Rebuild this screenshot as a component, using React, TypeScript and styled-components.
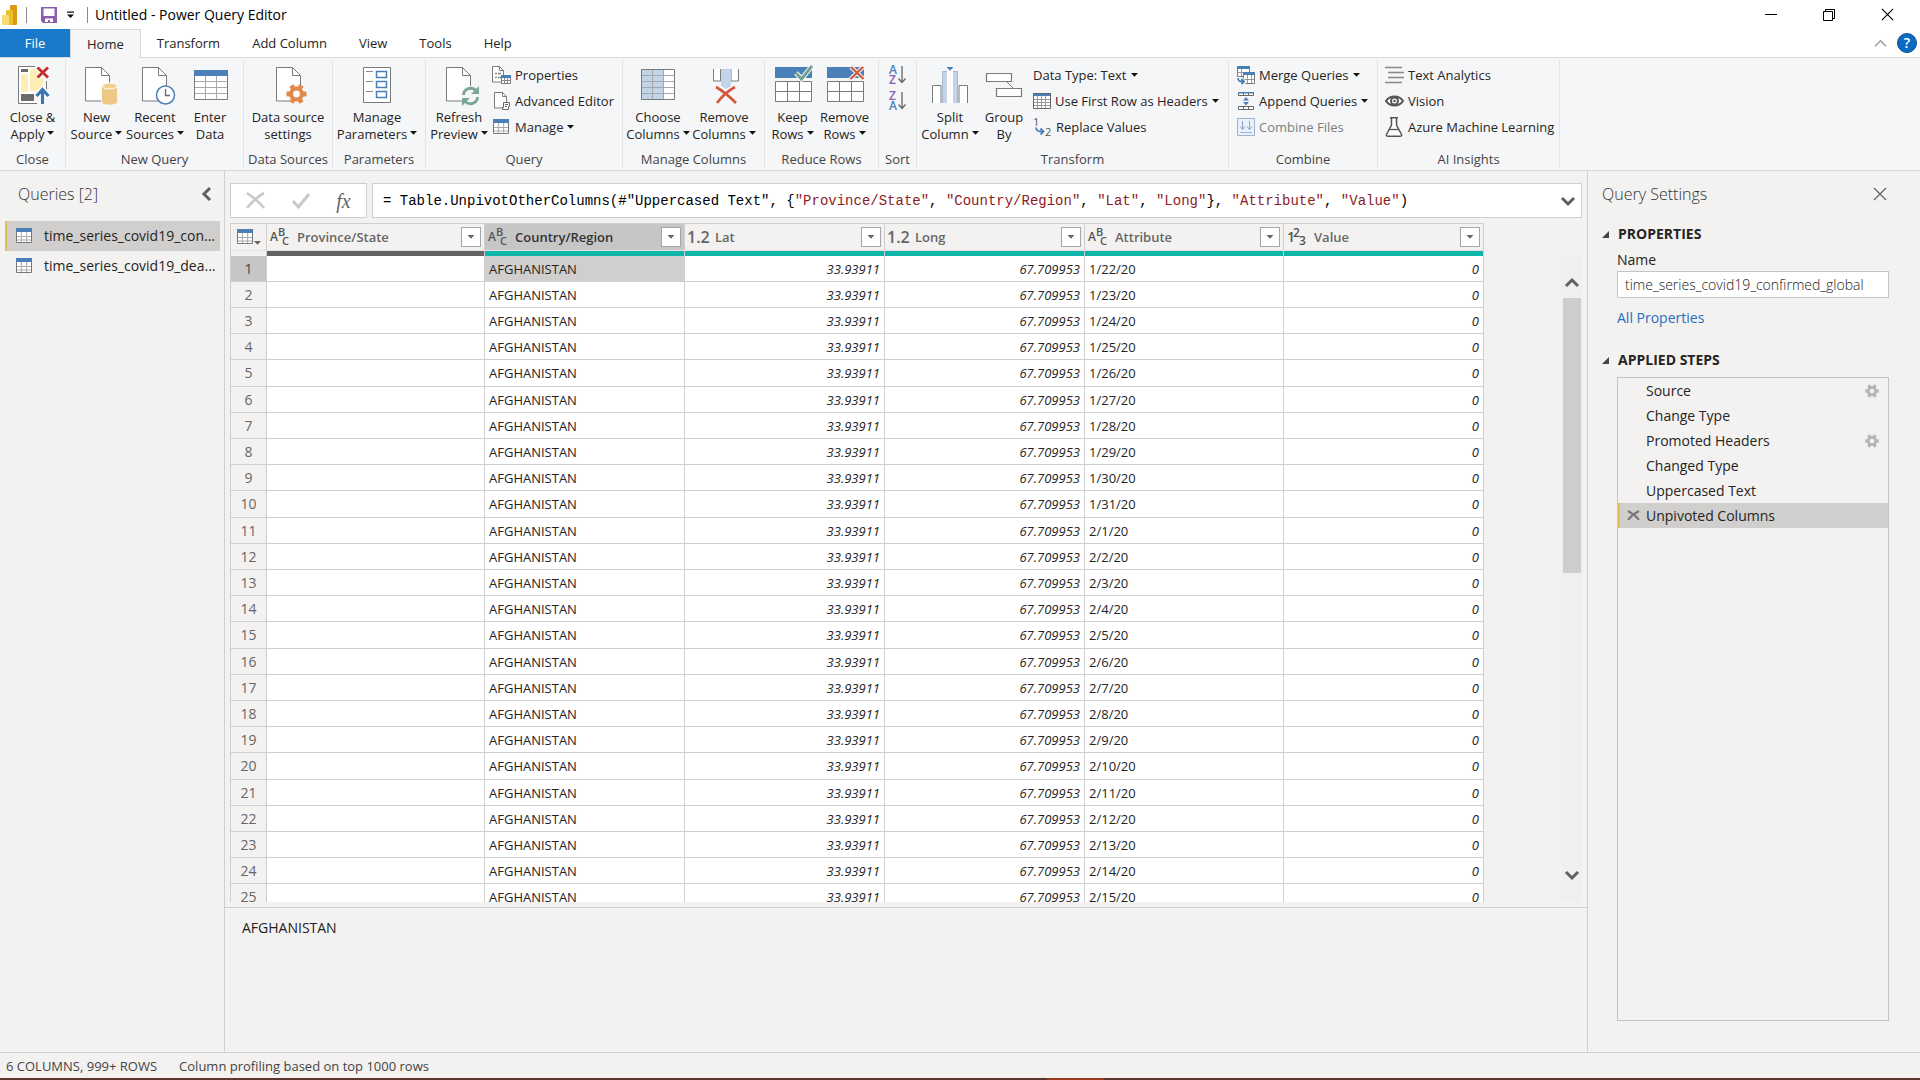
import React from "react";
import styled, { createGlobalStyle, css } from "styled-components";

const ui = `"Open Sans", "Noto Sans", "Liberation Sans", sans-serif`;
const mono = `"Liberation Mono", "DejaVu Sans Mono", monospace`;
const line = "#cfcfcf";
const panel = "#f3f2f1";

const Global = createGlobalStyle`
  * { box-sizing: border-box; }
  body { margin: 0; background: ${panel}; font-family: ${ui}; font-size: 13px; color: #252423; }
  button { font: inherit; color: inherit; background: none; border: 0; padding: 0; margin: 0; cursor: default; }
  svg { display: block; flex: none; overflow: visible; }
`;

/* ---------- shell ---------- */
const Window = styled.div`
  display: flex;
  flex-direction: column;
  height: 100vh;
  overflow: hidden;
`;
const TitleBar = styled.header`
  display: flex;
  align-items: center;
  height: 29px;
  flex: none;
  background: #fff;
  padding: 0 4px 0 2px;
`;
const Divider = styled.span`
  width: 1px;
  height: 16px;
  background: #8a8a8a;
`;
const QuickTools = styled.div`
  display: flex;
  align-items: center;
  gap: 10px;
  padding: 0 13px 0 14px;
`;
const Title = styled.h1`
  margin: 0 auto 0 7px;
  font-size: 14px;
  line-height: 20px;
  font-weight: 400;
  color: #000;
`;
const Brand = styled.span`
  margin-right: 9px;
`;
const WindowButton = styled.button`
  display: flex;
  justify-content: center;
  align-items: center;
  width: 58px;
  height: 28px;
`;

/* ---------- tabs ---------- */
const TabBar = styled.nav`
  display: flex;
  align-items: stretch;
  height: 29px;
  flex: none;
  background: #fff;
  border-bottom: 1px solid #d6d8da;
`;
const Tab = styled.button<{ $kind?: "file" | "active" }>`
  padding: 0 16px;
  line-height: 28px;
  ${(p) =>
    p.$kind === "file" &&
    css`
      width: 70px;
      background: #1979ca;
      color: #fff;
    `}
  ${(p) =>
    p.$kind === "active" &&
    css`
      line-height: 26px;
      height: 29px;
      background: #f5f6f8;
      border: 1px solid #d6d8da;
      border-bottom: 0;
    `}
`;
const TabTools = styled.div`
  display: flex;
  align-items: center;
  gap: 10px;
  margin-left: auto;
  padding-right: 3px;
`;
const HelpButton = styled.button`
  width: 20px;
  height: 20px;
  border-radius: 50%;
  background: #0b6bc4;
  border: 1px solid #0a4f8c;
  color: #fff;
  font-weight: 600;
  font-size: 14px;
  line-height: 18px;
`;

/* ---------- ribbon ---------- */
const Ribbon = styled.div`
  display: flex;
  flex: none;
  height: 113px;
  background: #f5f6f8;
  border-bottom: 1px solid #d6d8da;
`;
const Group = styled.section<{ $w: number }>`
  display: flex;
  flex-direction: column;
  flex: none;
  width: ${(p) => p.$w}px;
  margin: 2px 0;
  border-right: 1px solid #e1e3e5;
`;
const GroupBody = styled.div<{ $center?: boolean }>`
  display: flex;
  flex: 1;
  justify-content: ${(p) => (p.$center ? "center" : "flex-start")};
`;
const GroupName = styled.h2`
  margin: 0;
  font-size: 13px;
  line-height: 17px;
  font-weight: 400;
  text-align: center;
  white-space: nowrap;
  color: #444;
`;
const BigButton = styled.button<{ $w: number }>`
  display: flex;
  flex-direction: column;
  align-items: center;
  flex: none;
  width: ${(p) => p.$w}px;
  padding-top: 5px;
  white-space: nowrap;
  line-height: 17px;
  svg + span {
    margin-top: 4px;
  }
`;
const Line = styled.span`
  display: flex;
  gap: 3px;
`;
const SmallList = styled.div<{ $gap?: number }>`
  display: flex;
  flex-direction: column;
  padding: 2px 0 0 ${(p) => p.$gap ?? 0}px;
`;
const SmallButton = styled.button<{ $off?: boolean }>`
  display: flex;
  align-items: center;
  gap: 4px;
  height: 26px;
  white-space: nowrap;
  color: ${(p) => (p.$off ? "#7d7d7d" : "inherit")};
`;
const SortList = styled.div`
  display: flex;
  flex-direction: column;
  align-items: center;
  width: 100%;
  padding-top: 5px;
  gap: 6px;
`;

/* ---------- body ---------- */
const Body = styled.div`
  display: flex;
  flex: 1;
  min-height: 0;
`;
const Side = styled.aside`
  flex: none;
  width: 225px;
  border-right: 1px solid ${line};
`;
const PanelHead = styled.div`
  display: flex;
  align-items: center;
  justify-content: space-between;
  height: 46px;
  padding-right: 2px;
`;
const SideHead = styled(PanelHead)`
  padding: 0 10px 0 18px;
`;
const PanelTitle = styled.h2`
  margin: 0;
  font-size: 16px;
  line-height: 22px;
  font-weight: 300;
  color: #333;
`;
const QueryList = styled.ul`
  list-style: none;
  margin: 4px 4px 0 5px;
  padding: 0;
`;
const QueryItem = styled.button<{ $on?: boolean }>`
  display: flex;
  align-items: center;
  gap: 12px;
  width: 100%;
  height: 30px;
  padding-left: 9px;
  border-left: 2px solid ${(p) => (p.$on ? "#e0c14c" : "transparent")};
  background: ${(p) => (p.$on ? "#d0cfcd" : "transparent")};
  font-size: 14px;
  line-height: 20px;
  white-space: nowrap;
`;
const Main = styled.main`
  display: flex;
  flex-direction: column;
  flex: 1;
  min-width: 0;
`;
const FormulaRow = styled.div`
  display: flex;
  gap: 5px;
  padding: 12px 5px 5px;
`;
const FormulaTools = styled.div`
  display: flex;
  justify-content: space-around;
  align-items: center;
  width: 137px;
  height: 35px;
  padding: 0 2px;
  background: #fff;
  border: 1px solid ${line};
`;
const FormulaBox = styled.div`
  display: flex;
  align-items: center;
  flex: 1;
  min-width: 0;
  height: 35px;
  padding: 0 6px 0 10px;
  background: #fff;
  border: 1px solid ${line};
`;
const Formula = styled.div`
  flex: 1;
  font-family: ${mono};
  font-size: 14px;
  line-height: 20px;
  white-space: pre;
  color: #000;
  outline: none;
`;
const Str = styled.span`
  color: #8c1c24;
`;
const Fx = styled.span`
  font-family: "Liberation Serif", serif;
  font-style: italic;
  font-size: 20px;
  line-height: 24px;
  color: #666;
`;
const GridArea = styled.div`
  display: flex;
  justify-content: space-between;
  flex: 1;
  min-height: 0;
  padding: 0 5px;
`;
const GridClip = styled.div`
  flex: 1;
  overflow: hidden;
`;
const Grid = styled.table`
  table-layout: fixed;
  width: 1254px;
  border-collapse: separate;
  border-spacing: 0;
  border-top: 1px solid ${line};
  border-left: 1px solid ${line};
`;
const Th = styled.th<{ $on?: boolean }>`
  height: 27px;
  padding: 0 3px;
  border-right: 1px solid ${line};
  border-bottom: 1px solid #e3e3e2;
  background: ${(p) => (p.$on ? "#c6c6c6" : "transparent")};
  color: ${(p) => (p.$on ? "#333" : "#666")};
  font-weight: 600;
  text-align: left;
`;
const HeadCell = styled.div`
  display: flex;
  align-items: center;
  height: 26px;
`;
const CornerCell = styled(HeadCell)`
  gap: 1px;
  padding-left: 3px;
  svg + svg {
    align-self: flex-end;
  }
`;
const HeadName = styled.span`
  flex: 1;
  line-height: 20px;
  margin-left: 7px;
`;
const FilterButton = styled.button`
  display: flex;
  align-items: center;
  justify-content: center;
  width: 20px;
  height: 20px;
  background: #fff;
  border: 1px solid #a6a6a6;
`;
const Quality = styled.td<{ $c: string }>`
  height: 5px;
  padding: 0;
  border-right: 1px solid ${line};
  background: ${(p) => p.$c};
`;
const Row = styled.tr`
  height: 26px;
  &:nth-child(5n) {
    height: 27px;
  }
`;
const RowNo = styled.th<{ $on?: boolean }>`
  padding: 0;
  border-right: 1px solid ${line};
  border-bottom: 1px solid ${line};
  background: ${(p) => (p.$on ? "#c6c6c6" : "transparent")};
  color: ${(p) => (p.$on ? "#444" : "#666")};
  font-size: 14px;
  line-height: 20px;
  font-weight: 400;
`;
const Td = styled.td<{ $on?: boolean; $num?: boolean }>`
  padding: 0 4px;
  border-right: 1px solid ${line};
  border-bottom: 1px solid ${line};
  background: ${(p) => (p.$on ? "#d0cfcd" : "#fff")};
  font-size: 13px;
  line-height: 20px;
  text-align: ${(p) => (p.$num ? "right" : "left")};
  font-style: ${(p) => (p.$num ? "italic" : "normal")};
`;
const ScrollBar = styled.div`
  display: flex;
  flex-direction: column;
  align-items: center;
  width: 21px;
  margin-top: 33px;
  padding: 20px 0;
  background: #efefef;
`;
const ScrollTrack = styled.div`
  flex: 1;
  width: 18px;
  margin: 8px 0;
`;
const Thumb = styled.div`
  height: 49%;
  background: #cdcdcd;
`;
const Preview = styled.output`
  display: block;
  flex: none;
  height: 145px;
  margin-top: 5px;
  padding: 10px 17px;
  border-top: 1px solid ${line};
  font-size: 14px;
  line-height: 20px;
`;

/* ---------- settings ---------- */
const Settings = styled.aside`
  display: flex;
  flex-direction: column;
  flex: none;
  width: 333px;
  padding: 0 31px 31px 14px;
  border-left: 1px solid ${line};
`;
const SectionTitle = styled.h3<{ $top: number }>`
  display: flex;
  align-items: center;
  gap: 9px;
  margin: ${(p) => p.$top}px 0 0;
  font-size: 14px;
  line-height: 20px;
  font-weight: 700;
`;
const Field = styled.div`
  display: flex;
  flex-direction: column;
  padding: 6px 0 0 15px;
  font-size: 14px;
  line-height: 20px;
`;
const NameInput = styled.input`
  height: 27px;
  margin: 1px 0 10px;
  padding: 0 7px;
  border: 1px solid #c4c4c4;
  background: #fff;
  font: 300 14px ${ui};
  color: #222;
`;
const Link = styled.a`
  color: #1f6fc0;
  text-decoration: none;
`;
const Steps = styled.ol`
  flex: 1;
  list-style: none;
  margin: 7px 0 0 15px;
  padding: 0;
  border: 1px solid #c4c4c4;
`;
const Step = styled.li<{ $on?: boolean }>`
  display: flex;
  align-items: center;
  height: 25px;
  padding-right: 9px;
  border-left: 2px solid ${(p) => (p.$on ? "#e0c14c" : "transparent")};
  background: ${(p) => (p.$on ? "#d0cfcd" : "transparent")};
  font-size: 14px;
  line-height: 20px;
`;
const StepIcon = styled.button`
  display: flex;
  justify-content: center;
  width: 26px;
`;
const StepName = styled.span`
  flex: 1;
`;
const Status = styled.footer`
  display: flex;
  gap: 22px;
  flex: none;
  height: 26px;
  padding-left: 6px;
  border-top: 1px solid ${line};
  font-size: 13px;
  line-height: 26px;
  color: #444;
`;
const Taskbar = styled.div`
  flex: none;
  height: 2px;
  background: linear-gradient(90deg, #5b362e 0 1047px, #93391c 1047px 1104px, #5b362e 1104px);
`;

/* ---------- icons ---------- */
const G = "#7a7a7a";
const B = "#4b7fb8";

const Caret = ({ w = 7, c = "#111" }: { w?: number; c?: string }) => (
  <svg width={w} height="14" viewBox="0 0 7 14" aria-hidden>
    <path d="M0 5h7L3.5 8.8z" fill={c} />
  </svg>
);
const Big = ({ children }: { children: React.ReactNode }) => (
  <svg width="40" height="40" viewBox="0 0 40 40" fill="none" aria-hidden>
    {children}
  </svg>
);
const Small = ({ children, w = 18 }: { children: React.ReactNode; w?: number }) => (
  <svg width={w} height="18" viewBox={`0 0 ${w} 18`} fill="none" aria-hidden>
    {children}
  </svg>
);
const Doc = ({ x }: { x: number }) => (
  <g transform={`translate(${x} 2)`}>
    <path d="M.5.5h16l8 8V34H.5z" fill="#fff" stroke={G} />
    <path d="M16.5.5v8h8" stroke={G} />
  </g>
);
const GearShape = ({ cx, cy, s, c, hole }: { cx: number; cy: number; s: number; c: string; hole: string }) => (
  <g transform={`translate(${cx} ${cy}) scale(${s})`}>
    {[0, 60, 120].map((a) => (
      <rect key={a} x="-2.4" y="-10" width="4.8" height="20" fill={c} transform={`rotate(${a + 30})`} />
    ))}
    <circle r="7.4" fill={c} />
    <circle r="3.4" fill={hole} />
  </g>
);
const CloseApplyIcon = () => (
  <Big>
    <path d="M5.500 1.500h16v37h-16z" fill="#fff" />
    <path d="M22 1.500H5.500v37H24" stroke={G} />
    <path d="M33.500 16v10" stroke={G} />
    <rect x="8" y="4" width="7" height="3" fill="#6b6b6b" />
    <path d="M8 9h7v18H8zM17 4h7l6 10v12H17z" fill="#fdeeb4" />
    <rect x="8" y="29" width="13" height="7" fill="#6b6b6b" />
    <path d="M24.500 2.500l10.500 10M35 2.500l-10.500 10" stroke="#fff" strokeWidth="5" />
    <path d="M24.500 2.500l10.500 10M35 2.500l-10.500 10" stroke="#c22f33" strokeWidth="3" />
    <path d="M29.500 39V26M23.500 31l6-6.500 6 6.500" stroke="#fff" strokeWidth="6" />
    <path d="M29.500 39V26M23.500 31l6-6.500 6 6.500" stroke="#3f76b2" strokeWidth="3.200" />
  </Big>
);
const NewSourceIcon = () => (
  <Big>
    <Doc x={8} />
    <path d="M24 21v16c0 4 17 4 17 0V21z" fill="#f5f6f8" />
    <path d="M25 21v16c0 3.500 15 3.500 15 0V21z" fill="#ecc884" />
    <ellipse cx="32.500" cy="21" rx="7.500" ry="3" fill="#f0cf90" stroke="#fff" />
  </Big>
);
const RecentIcon = () => (
  <Big>
    <Doc x={7} />
    <circle cx="30.500" cy="30" r="9" fill="#fff" stroke={B} strokeWidth="1.500" />
    <path d="M30.500 24v6.500h4.500" stroke="#5b6b7b" strokeWidth="1.300" />
  </Big>
);
const EnterDataIcon = () => (
  <Big>
    <path d="M4.500 5.500h33v29h-33z" fill="#fff" stroke={G} />
    <path d="M4 5h34v6H4z" fill={B} />
    <path d="M5 16.500h32M5 22.500h32M5 28.500h32M15.500 11v23M26.500 11v23" stroke="#a9a9a9" />
  </Big>
);
const DataSourceIcon = () => (
  <Big>
    <Doc x={8} />
    <circle cx="28.500" cy="29" r="9" fill="#f5f6f8" />
    <GearShape cx={28.5} cy={29} s={1} c="#e0894a" hole="#fff" />
  </Big>
);
const ParamsIcon = () => (
  <Big>
    <path d="M6.500 2.500h27v35h-27z" fill="#fff" stroke={G} />
    <path d="M9 6.500h7M9 16.500h7M9 26.500h7" stroke="#8a8a8a" />
    <path d="M19.500 6.500h10v6h-10zM19.500 16.500h10v6h-10zM19.500 26.500h10v6h-10z" stroke={B} strokeWidth="1.500" />
  </Big>
);
const RefreshIcon = () => (
  <Big>
    <Doc x={7} />
    <circle cx="31.500" cy="31" r="10" fill="#f5f6f8" />
    <path d="M24.500 30a7 7 0 0 1 12.500-4M38.500 32a7 7 0 0 1-12.500 4" stroke="#7aa793" strokeWidth="2.800" />
    <path d="M40 21v8h-8zM23 41v-8h8z" fill="#7aa793" />
  </Big>
);
const ChooseColsIcon = () => (
  <Big>
    <path d="M3.500 4.500h33v30h-33z" fill="#fff" />
    <path d="M4 5h22v29H4z" fill="#c3d4e6" />
    <path d="M4 10.500h32M4 16.500h32M4 22.500h32M4 28.500h32M14.500 5v29M25.500 5v29" stroke="#a2a9b0" />
    <path d="M3.500 4.500h33v30h-33z" stroke={G} />
  </Big>
);
const RemoveColsIcon = () => (
  <Big>
    <path d="M9.500 4v12h7V4M27 4v12h7.500V4" fill="#fff" stroke={G} />
    <path d="M17 4h10v17l-5 3-5-3z" fill="#c3d4e6" />
    <path d="M12 22l20 16M31 22L13 38" stroke="#f5f6f8" strokeWidth="5" />
    <path d="M12 22c7 4 14 10 20 16M31 22c-7 4-13 9-18 16" stroke="#d2593c" strokeWidth="2.600" />
  </Big>
);
const rowsGrid = (
  <>
    <path d="M2 2h37v11H2z" fill={B} />
    <path d="M2.500 16.500h36v20h-36z" fill="#fff" stroke={G} />
    <path d="M3 26.500h35M14.500 17v19M26.500 17v19" stroke={G} />
  </>
);
const KeepRowsIcon = () => (
  <Big>
    {rowsGrid}
    <path d="M23 8l5.500 6L39 1" stroke="#f5f6f8" strokeWidth="5" />
    <path d="M23 8l5.500 6L39 1" stroke="#6fa08a" strokeWidth="2.800" />
  </Big>
);
const RemoveRowsIcon = () => (
  <Big>
    {rowsGrid}
    <path d="M26 2l12.500 12M38 2L25.500 14" stroke="#f5f6f8" strokeWidth="4.500" />
    <path d="M26 2l12.500 12M38 2L25.500 14" stroke="#cf5a3e" strokeWidth="2.400" />
  </Big>
);
const SplitIcon = () => (
  <Big>
    <path d="M2.500 38V20.500H11V38M29 38V20.500h8.500V38" fill="#fff" stroke={G} />
    <path d="M17 6h6v32h-6z" fill="#fff" />
    <path d="M12 6h5v32h-5zM23 6h5v32h-5z" fill="#c3d4e6" />
    <path d="M12.500 38V6.500H17M27.500 38V6.500H23" stroke="#a9b9ca" />
    <path d="M16.500 2h7L20 5.800z" fill={B} />
  </Big>
);
const GroupByIcon = () => (
  <Big>
    <path d="M22 16l7 7" stroke={G} />
    <path d="M2.500 8.500h25v8h-25zM12.500 23.500h25v8h-25z" fill="#fff" stroke={G} strokeWidth="1.200" />
  </Big>
);
const MiniTable = ({ x = 0, y = 0, w = 17, h = 16 }: { x?: number; y?: number; w?: number; h?: number }) => (
  <g transform={`translate(${x} ${y})`}>
    <path d={`M.5.5h${w - 1}v${h - 1}H.5z`} fill="#fff" stroke="#777" />
    <path d={`M1 8.500h${w - 2}M1 12h${w - 2}M${w / 3} 4v${h - 5}M${(w * 2) / 3} 4v${h - 5}`} stroke="#a9a9a9" />
    <path d={`M0 0h${w}v4H0z`} fill={B} />
  </g>
);
const TableIcon = () => (
  <Small w={16}>
    <MiniTable y={1} w={16} h={15} />
  </Small>
);
const PropsIcon = () => (
  <Small w={19}>
    <path d="M.5.5h7l4 4V16H.5z" fill="#fff" stroke={G} />
    <path d="M7.500.5v4h4" stroke={G} />
    <path d="M3 7.500h2M3 11.500h2M6 7.500h3M6 11.500h3" stroke="#888" strokeWidth="1.500" />
    <path d="M9.500 9.500h9v8h-9z" fill="#fff" stroke={G} />
    <path d="M9 9h10v3H9z" fill={B} />
    <path d="M10 14.500h8M12.500 12v5M15.500 12v5" stroke="#888" />
  </Small>
);
const AdvIcon = () => (
  <Small w={19}>
    <path d="M2.500.5h8l4 4V16h-12z" fill="#fff" stroke={G} />
    <path d="M10.500.5v4h4" stroke={G} />
    <path d="M11.500 10.500h6v4h-1v3h-6v-2h1z" fill="#fff" stroke="#666" />
    <path d="M13 12.500h3M13 14.500h2" stroke="#666" />
  </Small>
);
const FirstRowIcon = () => (
  <Small>
    <path d="M.5 1.500h17v15H.5z" fill="#fff" />
    <path d="M0 1h18v3H0z" fill={B} />
    <path d="M1 7.500h16M1 10.500h16M1 13.500h16M4.500 4v12M8.500 4v12M12.500 4v12" stroke="#999" />
    <path d="M.5 1.500h17v15H.5z" stroke="#666" />
  </Small>
);
const IconText = styled.text`
  font-family: ${ui};
`;
const ReplaceIcon = () => (
  <Small w={19}>
    <IconText x="0" y="8" fontSize="11" fill="#555">1</IconText>
    <IconText x="12" y="18" fontSize="11" fill="#555">2</IconText>
    <path d="M3 9.500c0 4 3 4 7 4M7.500 10.500l3 3-3 3" stroke={B} strokeWidth="1.800" />
  </Small>
);
const MergeIcon = () => (
  <Small>
    <path d="M.5.5h12v10H.5z" fill="#fff" stroke={G} />
    <path d="M0 0h13v3H0z" fill={B} />
    <path d="M1 6.500h5M4.500 3v7" stroke="#999" />
    <path d="M6.500 6.500h11v11h-11z" fill="#fff" stroke={G} />
    <path d="M6 6h12v3H6z" fill={B} />
    <path d="M7 13.500h10M10.500 9v8M14.500 9v8" stroke="#999" />
    <path d="M0 12c0 4 3 4 6 4M4 13l3 3-3 3" stroke="#f5f6f8" strokeWidth="4" />
    <path d="M1 12c0 3.500 2 3.500 6 3.500M4.500 13l2.500 2.500L4.500 18" stroke={B} strokeWidth="1.800" />
  </Small>
);
const AppendIcon = () => (
  <Small>
    <path d="M1.500.5h15v3h-15zM1.500 14.500h15v3h-15z" fill="#fff" stroke="#666" />
    <path d="M1 0h16v1.500H1z" fill={B} />
    <path d="M6.500 1v3M11.500 1v3M6.500 14v4M11.500 14v4" stroke="#666" />
    <path d="M9 5l-3 3.500h6zM9 13.500L6 10h6z" fill={B} />
  </Small>
);
const CombineIcon = () => (
  <Small>
    <path d="M.5.5h17v17H.5z" fill="#e9f1fa" stroke="#9fb3cc" />
    <path d="M5.500 3v8M3 8.500l2.500 3 2.500-3M12.500 3v8M10 8.500l2.500 3 2.500-3" stroke="#8aa4c5" />
    <path d="M3 14.500h12" stroke="#9fb3cc" />
  </Small>
);
const TextAnIcon = () => (
  <Small w={19}>
    <path d="M0 1.500h17M3 6.500h16M3 11.500h16M0 16.500h17" stroke="#888" strokeWidth="1.300" />
  </Small>
);
const VisionIcon = () => (
  <Small w={19}>
    <path d="M1 9c4-6 13-6 17 0-4 6-13 6-17 0z" fill="#fff" stroke="#555" strokeWidth="2" />
    <circle cx="9.500" cy="9" r="3.500" fill="#fff" stroke="#555" strokeWidth="2" />
    <circle cx="9.500" cy="9" r="1.300" fill="#555" />
  </Small>
);
const FlaskIcon = () => (
  <svg width="19" height="20" viewBox="0 0 19 20" fill="none" aria-hidden>
    <path d="M5 .8h8M6.500 1v7L1.500 17.500c-.5 1 0 1.700 1 1.700h13c1 0 1.500-.7 1-1.700L11.500 8V1" fill="#fff" stroke="#555" strokeWidth="1.500" />
    <path d="M4.500 12.500h9" stroke="#555" strokeWidth="1.300" />
  </svg>
);
const SortIcon = ({ a, b, ca, cb }: { a: string; b: string; ca: string; cb: string }) => (
  <svg width="17" height="20" viewBox="0 0 17 20" fill="none" aria-hidden>
    <IconText x="0" y="9" fontSize="12" fontWeight="600" fill={ca}>{a}</IconText>
    <IconText x="0" y="19" fontSize="12" fontWeight="600" fill={cb}>{b}</IconText>
    <path d="M13 1v16M9.500 13.500l3.500 4 3.500-4" stroke="#666" strokeWidth="1.300" />
  </svg>
);
const GearIcon = () => (
  <svg width="14" height="14" viewBox="0 0 14 14" aria-hidden>
    <GearShape cx={7} cy={7} s={0.68} c="#b4b4b4" hole={panel} />
  </svg>
);
const Chevron = ({ d, s = 14, c = "#606060", t = 3 }: { d: string; s?: number; c?: string; t?: number }) => (
  <svg width={s} height={s} viewBox="0 0 14 14" fill="none" aria-hidden>
    <path d={d} stroke={c} strokeWidth={t} />
  </svg>
);
const up = "M1 10l6-6 6 6";
const down = "M1 4l6 6 6-6";
const cross = "M1 1l12 12M13 1L1 13";
const TypeIcon = ({ kind }: { kind: string }) => (
  <svg width="20" height="20" viewBox="0 0 20 20" fill={kind === "dec" ? "#666" : "#555"} aria-hidden>
    {kind === "dec" && <IconText x="-1" y="16" fontSize="16">1.2</IconText>}
    {kind === "abc" && (
      <>
        <IconText x="0" y="14" fontSize="12" fontWeight="600">A</IconText>
        <IconText x="8" y="9" fontSize="11" fontWeight="600">B</IconText>
        <IconText x="12" y="18" fontSize="11" fontWeight="600">C</IconText>
      </>
    )}
    {kind === "int" && (
      <>
        <IconText x="0" y="15" fontSize="14" fontWeight="600">1</IconText>
        <IconText x="6" y="10" fontSize="12" fontWeight="600">2</IconText>
        <IconText x="12" y="18" fontSize="12" fontWeight="600">3</IconText>
      </>
    )}
  </svg>
);
const LogoIcon = () => (
  <svg width="15" height="20" viewBox="0 0 15 20" aria-hidden>
    <rect x="8" width="7" height="20" rx="1" fill="#d99a12" />
    <rect x="4" y="5" width="7" height="15" rx="1" fill="#ecc02d" />
    <rect y="10" width="7" height="10" rx="1" fill="#f7dd72" />
  </svg>
);
const SaveIcon = () => (
  <svg width="16" height="16" viewBox="0 0 16 16" aria-hidden>
    <path d="M0 0h16v16H2l-2-2z" fill="#8a5fae" />
    <path d="M2.500 1.500h11v7.500h-11zM4 11.500h8V15H9v-2H7v2H4z" fill="#fff" />
  </svg>
);

/* ---------- data ---------- */
const columns = [
  { name: "Province/State", kind: "abc", w: 218 },
  { name: "Country/Region", kind: "abc", w: 200 },
  { name: "Lat", kind: "dec", w: 200 },
  { name: "Long", kind: "dec", w: 200 },
  { name: "Attribute", kind: "abc", w: 199 },
  { name: "Value", kind: "int", w: 200 },
];
const dates = Array.from({ length: 25 }, (_, i) => (i < 10 ? `1/${22 + i}/20` : `2/${i - 9}/20`));
const steps = [
  { name: "Source", gear: true },
  { name: "Change Type" },
  { name: "Promoted Headers", gear: true },
  { name: "Changed Type" },
  { name: "Uppercased Text" },
  { name: "Unpivoted Columns", on: true },
];

const Tool = ({ icon, a, b, menu, w }: { icon: React.ReactNode; a: string; b: string; menu?: boolean; w: number }) => (
  <BigButton $w={w}>
    {icon}
    <span>{a}</span>
    <Line>
      {b}
      {menu && <Caret />}
    </Line>
  </BigButton>
);
const Item = ({ icon, label, menu, off }: { icon?: React.ReactNode; label: string; menu?: boolean; off?: boolean }) => (
  <SmallButton $off={off} disabled={off}>
    {icon}
    <span>{label}</span>
    {menu && <Caret />}
  </SmallButton>
);

export default function App() {
  return (
    <Window>
      <Global />
      <TitleBar>
        <Brand><LogoIcon /></Brand>
        <Divider />
        <QuickTools>
          <button aria-label="Save"><SaveIcon /></button>
          <button aria-label="Customize toolbar">
            <svg width="7" height="8" viewBox="0 0 7 8" aria-hidden>
              <path d="M0 .5h7v1.200H0zM0 3.500h7L3.500 7z" fill="#111" />
            </svg>
          </button>
        </QuickTools>
        <Divider />
        <Title>Untitled - Power Query Editor</Title>
        <WindowButton aria-label="Minimize">
          <svg width="12" height="12" viewBox="0 0 12 12" aria-hidden><path d="M0 5.500h12" stroke="#000" /></svg>
        </WindowButton>
        <WindowButton aria-label="Restore">
          <svg width="12" height="12" viewBox="0 0 12 12" fill="none" stroke="#000" aria-hidden>
            <path d="M.5 2.500h9v9h-9zM2.500 2.500v-2h9v9h-2" />
          </svg>
        </WindowButton>
        <WindowButton aria-label="Close"><Chevron d={cross} s={13} c="#000" t={1.2} /></WindowButton>
      </TitleBar>
      <TabBar>
        <Tab $kind="file">File</Tab>
        <Tab $kind="active">Home</Tab>
        <Tab>Transform</Tab>
        <Tab>Add Column</Tab>
        <Tab>View</Tab>
        <Tab>Tools</Tab>
        <Tab>Help</Tab>
        <TabTools>
          <button aria-label="Collapse ribbon"><Chevron d={up} s={13} c="#9a9a9a" t={1.4} /></button>
          <HelpButton>?</HelpButton>
        </TabTools>
      </TabBar>
      <Ribbon>
        <Group $w={66}>
          <GroupBody><Tool w={65} icon={<CloseApplyIcon />} a="Close &amp;" b="Apply" menu /></GroupBody>
          <GroupName>Close</GroupName>
        </Group>
        <Group $w={178}>
          <GroupBody>
            <Tool w={61} icon={<NewSourceIcon />} a="New" b="Source" menu />
            <Tool w={56} icon={<RecentIcon />} a="Recent" b="Sources" menu />
            <Tool w={54} icon={<EnterDataIcon />} a="Enter" b="Data" />
          </GroupBody>
          <GroupName>New Query</GroupName>
        </Group>
        <Group $w={89}>
          <GroupBody $center><Tool w={80} icon={<DataSourceIcon />} a="Data source" b="settings" /></GroupBody>
          <GroupName>Data Sources</GroupName>
        </Group>
        <Group $w={93}>
          <GroupBody><Tool w={88} icon={<ParamsIcon />} a="Manage" b="Parameters" menu /></GroupBody>
          <GroupName>Parameters</GroupName>
        </Group>
        <Group $w={197}>
          <GroupBody>
            <Tool w={66} icon={<RefreshIcon />} a="Refresh" b="Preview" menu />
            <SmallList>
              <Item icon={<PropsIcon />} label="Properties" />
              <Item icon={<AdvIcon />} label="Advanced Editor" />
              <Item icon={<Small w={19}><MiniTable x={1} y={1} w={16} h={15} /></Small>} label="Manage" menu />
            </SmallList>
          </GroupBody>
          <GroupName>Query</GroupName>
        </Group>
        <Group $w={142}>
          <GroupBody>
            <Tool w={70} icon={<ChooseColsIcon />} a="Choose" b="Columns" menu />
            <Tool w={62} icon={<RemoveColsIcon />} a="Remove" b="Columns" menu />
          </GroupBody>
          <GroupName>Manage Columns</GroupName>
        </Group>
        <Group $w={114}>
          <GroupBody>
            <Tool w={55} icon={<KeepRowsIcon />} a="Keep" b="Rows" menu />
            <Tool w={49} icon={<RemoveRowsIcon />} a="Remove" b="Rows" menu />
          </GroupBody>
          <GroupName>Reduce Rows</GroupName>
        </Group>
        <Group $w={38}>
          <GroupBody>
            <SortList>
              <button aria-label="Sort ascending"><SortIcon a="A" b="Z" ca={B} cb="#8a5fae" /></button>
              <button aria-label="Sort descending"><SortIcon a="Z" b="A" ca="#8a5fae" cb={B} /></button>
            </SortList>
          </GroupBody>
          <GroupName>Sort</GroupName>
        </Group>
        <Group $w={312}>
          <GroupBody>
            <Tool w={66} icon={<SplitIcon />} a="Split" b="Column" menu />
            <Tool w={42} icon={<GroupByIcon />} a="Group" b="By" />
            <SmallList $gap={8}>
              <Item label="Data Type: Text" menu />
              <Item icon={<FirstRowIcon />} label="Use First Row as Headers" menu />
              <Item icon={<ReplaceIcon />} label="Replace Values" />
            </SmallList>
          </GroupBody>
          <GroupName>Transform</GroupName>
        </Group>
        <Group $w={149}>
          <GroupBody>
            <SmallList $gap={8}>
              <Item icon={<MergeIcon />} label="Merge Queries" menu />
              <Item icon={<AppendIcon />} label="Append Queries" menu />
              <Item icon={<CombineIcon />} label="Combine Files" off />
            </SmallList>
          </GroupBody>
          <GroupName>Combine</GroupName>
        </Group>
        <Group $w={182}>
          <GroupBody>
            <SmallList $gap={7}>
              <Item icon={<TextAnIcon />} label="Text Analytics" />
              <Item icon={<VisionIcon />} label="Vision" />
              <Item icon={<FlaskIcon />} label="Azure Machine Learning" />
            </SmallList>
          </GroupBody>
          <GroupName>AI Insights</GroupName>
        </Group>
      </Ribbon>

      <Body>
        <Side>
          <SideHead>
            <PanelTitle>Queries [2]</PanelTitle>
            <button aria-label="Collapse queries"><Chevron d="M10 1L4 7l6 6" /></button>
          </SideHead>
          <QueryList>
            <li><QueryItem $on><TableIcon />time_series_covid19_con...</QueryItem></li>
            <li><QueryItem><TableIcon />time_series_covid19_dea...</QueryItem></li>
          </QueryList>
        </Side>

        <Main>
          <FormulaRow>
            <FormulaTools>
              <button aria-label="Cancel">
                <svg width="19" height="17" viewBox="0 0 19 17" fill="none" aria-hidden>
                  <path d="M1 1c6 4 12 9 17 15M18 1C11 5 6 10 1 16" stroke="#c8c8c8" strokeWidth="2.600" />
                </svg>
              </button>
              <button aria-label="Commit">
                <svg width="18" height="16" viewBox="0 0 18 16" fill="none" aria-hidden>
                  <path d="M1 8l5.500 6L17 1" stroke="#c8c8c8" strokeWidth="3" />
                </svg>
              </button>
              <button aria-label="Insert step"><Fx>fx</Fx></button>
            </FormulaTools>
            <FormulaBox>
              <Formula role="textbox" aria-label="Formula" tabIndex={0}>
                = Table.UnpivotOtherColumns(#"Uppercased Text", {"{"}
                <Str>"Province/State"</Str>, <Str>"Country/Region"</Str>, <Str>"Lat"</Str>, <Str>"Long"</Str>
                {"}"}, <Str>"Attribute"</Str>, <Str>"Value"</Str>)
              </Formula>
              <button aria-label="Expand formula"><Chevron d={down} /></button>
            </FormulaBox>
          </FormulaRow>
          <GridArea>
            <GridClip>
              <Grid>
                <colgroup>
                  <col style={{ width: 36 }} />
                  {columns.map((c) => <col key={c.name} style={{ width: c.w }} />)}
                </colgroup>
                <thead>
                  <tr>
                    <Th>
                      <CornerCell><TableIcon /><Caret c="#666" /></CornerCell>
                    </Th>
                    {columns.map((c, i) => (
                      <Th key={c.name} $on={i === 1} scope="col">
                        <HeadCell>
                          <TypeIcon kind={c.kind} />
                          <HeadName>{c.name}</HeadName>
                          <FilterButton aria-label={`Filter ${c.name}`}><Caret w={8} c="#666" /></FilterButton>
                        </HeadCell>
                      </Th>
                    ))}
                  </tr>
                  <tr>
                    <Quality $c="transparent" />
                    {columns.map((c, i) => <Quality key={c.name} $c={i ? "#0db6a8" : "#636363"} />)}
                  </tr>
                </thead>
                <tbody>
                  {dates.map((d, i) => (
                    <Row key={d}>
                      <RowNo scope="row" $on={i === 0}>{i + 1}</RowNo>
                      <Td />
                      <Td $on={i === 0}>AFGHANISTAN</Td>
                      <Td $num>33.93911</Td>
                      <Td $num>67.709953</Td>
                      <Td>{d}</Td>
                      <Td $num>0</Td>
                    </Row>
                  ))}
                </tbody>
              </Grid>
            </GridClip>
            <ScrollBar>
              <Chevron d={up} />
              <ScrollTrack><Thumb /></ScrollTrack>
              <Chevron d={down} />
            </ScrollBar>
          </GridArea>
          <Preview>AFGHANISTAN</Preview>
        </Main>

        <Settings>
          <PanelHead>
            <PanelTitle>Query Settings</PanelTitle>
            <button aria-label="Close settings"><Chevron d={cross} c="#666" t={1.3} /></button>
          </PanelHead>
          <SectionTitle $top={7}>
            <svg width="7" height="7" viewBox="0 0 7 7" aria-hidden><path d="M7 0v7H0z" fill="#444" /></svg>
            PROPERTIES
          </SectionTitle>
          <Field>
            <label htmlFor="query-name">Name</label>
            <NameInput id="query-name" defaultValue="time_series_covid19_confirmed_global" />
            <Link href="#properties">All Properties</Link>
          </Field>
          <SectionTitle $top={22}>
            <svg width="7" height="7" viewBox="0 0 7 7" aria-hidden><path d="M7 0v7H0z" fill="#444" /></svg>
            APPLIED STEPS
          </SectionTitle>
          <Steps>
            {steps.map((s) => (
              <Step key={s.name} $on={s.on}>
                <StepIcon aria-label={`Delete ${s.name}`}>
                  {s.on && (
                    <svg width="13" height="11" viewBox="0 0 13 11" fill="none" aria-hidden>
                      <path d="M1 1c4 2 8 5 11 9M12 1C8 3 4 6 1 10" stroke="#777" strokeWidth="2" />
                    </svg>
                  )}
                </StepIcon>
                <StepName>{s.name}</StepName>
                {s.gear && <button aria-label={`Edit ${s.name}`}><GearIcon /></button>}
              </Step>
            ))}
          </Steps>
        </Settings>
      </Body>
      <Status>
        <span>6 COLUMNS, 999+ ROWS</span>
        <span>Column profiling based on top 1000 rows</span>
      </Status>
      <Taskbar />
    </Window>
  );
}
